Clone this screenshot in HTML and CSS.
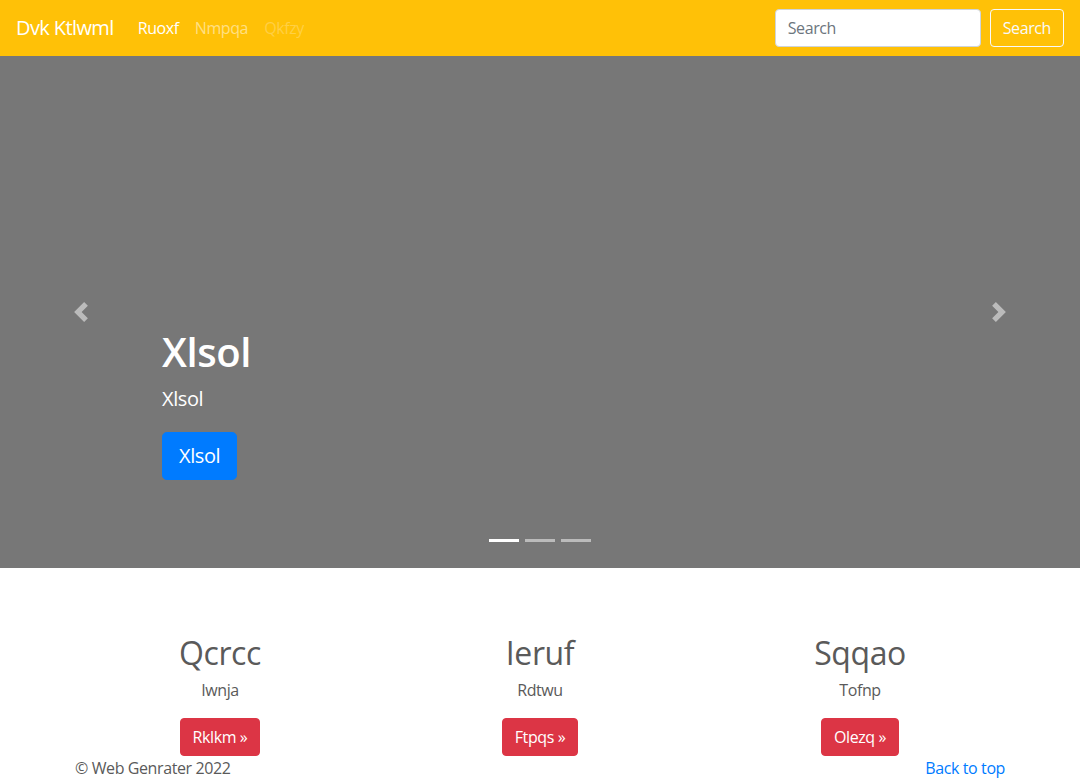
FILE: index.html
```html
<!DOCTYPE html>
<html lang="en">
<head>
<meta charset="utf-8">
<title>Carousel</title>
<link rel="stylesheet" href="styles.css">
</head>
<body>
<header>
  <nav class="navbar">
    <a class="brand" href="#">Dvk Ktlwml</a>
    <ul class="nav">
      <li><a class="nav-link active" href="#">Ruoxf</a></li>
      <li><a class="nav-link" href="#">Nmpqa</a></li>
      <li><a class="nav-link disabled" href="#">Qkfzy</a></li>
    </ul>
    <form class="search">
      <input class="search-input" type="text" placeholder="Search">
      <button class="search-btn" type="button">Search</button>
    </form>
  </nav>
</header>
<main>
  <div class="carousel">
    <ol class="indicators">
      <li class="active"></li>
      <li></li>
      <li></li>
    </ol>
    <div class="caption">
      <h1 class="caption-title">Xlsol</h1>
      <p class="caption-text">Xlsol</p>
      <p class="caption-action"><a class="btn btn-lg btn-primary" href="#">Xlsol</a></p>
    </div>
    <a class="control control-prev" href="#">
      <svg class="control-icon" viewBox="0 0 8 8" width="20" height="20"><path d="M5.25 0l-4 4 4 4 1.5-1.5-2.5-2.5 2.5-2.5-1.5-1.5z" fill="#fff"/></svg>
    </a>
    <a class="control control-next" href="#">
      <svg class="control-icon" viewBox="0 0 8 8" width="20" height="20"><path d="M2.75 0l-1.5 1.5 2.5 2.5-2.5 2.5 1.5 1.5 4-4-4-4z" fill="#fff"/></svg>
    </a>
  </div>

  <div class="container marketing">
    <div class="row">
      <div class="col">
        <h2 class="col-title">Qcrcc</h2>
        <p class="col-text">Iwnja</p>
        <p class="col-action"><a class="btn btn-danger" href="#">Rklkm &raquo;</a></p>
      </div>
      <div class="col">
        <h2 class="col-title">Ieruf</h2>
        <p class="col-text">Rdtwu</p>
        <p class="col-action"><a class="btn btn-danger" href="#">Ftpqs &raquo;</a></p>
      </div>
      <div class="col">
        <h2 class="col-title">Sqqao</h2>
        <p class="col-text">Tofnp</p>
        <p class="col-action"><a class="btn btn-danger" href="#">Olezq &raquo;</a></p>
      </div>
    </div>
  </div>

  <footer class="container footer">
    <p class="footer-copy">&copy; Web Genrater 2022</p>
    <p class="footer-top"><a href="#">Back to top</a></p>
  </footer>
</main>
</body>
</html>
```

FILE: styles.css
```css
* { box-sizing: border-box; }

html, body {
  margin: 0;
  padding: 0;
}

body {
  font-family: "Segoe UI", "Open Sans", "Noto Sans", sans-serif;
  font-size: 16px;
  line-height: 1.5;
  letter-spacing: -0.025em;
  color: #5a5a5a;
  background: #fff;
}

a { text-decoration: none; }

/* Navbar */
.navbar {
  height: 56px;
  background: #ffc107;
  display: flex;
  align-items: center;
  padding: 8px 16px;
}

.brand {
  font-size: 20px;
  line-height: 30px;
  padding: 5px 0;
  margin-right: 16px;
  color: #fff;
  white-space: nowrap;
  letter-spacing: -0.03em;
}

.nav {
  display: flex;
  list-style: none;
  margin: 0;
  padding: 0;
  flex: 1;
}

.nav-link {
  display: block;
  padding: 8px;
  line-height: 24px;
  color: rgba(255, 255, 255, 0.5);
}

.nav-link.active { color: #fff; }
.nav-link.disabled { color: rgba(255, 255, 255, 0.25); }

.search {
  display: flex;
  align-items: center;
  gap: 9px;
  margin: 0;
}

.search-input {
  width: 206px;
  height: 38px;
  padding: 6px 12px;
  font: inherit;
  font-size: 16px;
  letter-spacing: -0.025em;
  color: #495057;
  background: #fff;
  border: 1px solid #ced4da;
  border-radius: 4px;
}

.search-input::placeholder { color: #6c757d; }

.search-btn {
  height: 38px;
  padding: 6px 12px;
  font: inherit;
  font-size: 16px;
  line-height: 24px;
  letter-spacing: -0.025em;
  color: #f8f9fa;
  background: transparent;
  border: 1px solid #f8f9fa;
  border-radius: 4px;
}

/* Carousel */
.carousel {
  position: relative;
  height: 512px;
  background: #777;
  margin-bottom: 64px;
  display: flex;
  flex-direction: column;
  justify-content: flex-end;
  padding: 0 15% 88px;
  color: #fff;
}

.caption-title {
  font-size: 40px;
  font-weight: 600;
  line-height: 1.2;
  margin: 0 0 8px;
}

.caption-text {
  font-size: 20px;
  line-height: 30px;
  margin: 0 0 18px;
}

.caption-action { margin: 0; }

.btn {
  display: inline-block;
  font-size: 16px;
  line-height: 24px;
  padding: 6px 12px;
  border: 1px solid transparent;
  border-radius: 4px;
  color: #fff;
}

.btn-lg {
  font-size: 20px;
  line-height: 30px;
  padding: 8px 16px;
  border-radius: 4.8px;
}

.btn-primary { background: #007bff; border-color: #007bff; }
.btn-danger { background: #dc3545; border-color: #dc3545; }

.control {
  position: absolute;
  top: 0;
  bottom: 0;
  width: 15%;
  display: flex;
  align-items: center;
  justify-content: center;
  opacity: 0.5;
}

.control-prev { left: 0; }
.control-next { right: 0; }

.control-icon { display: block; }

.indicators {
  position: absolute;
  left: 0;
  right: 0;
  bottom: 26px;
  display: flex;
  justify-content: center;
  list-style: none;
  margin: 0;
  padding: 0;
}

.indicators li {
  width: 30px;
  height: 3px;
  margin: 0 3px;
  background: #fff;
  opacity: 0.5;
}

.indicators li.active { opacity: 1; }

/* Marketing */
.container {
  width: 960px;
  margin: 0 auto;
  padding: 0 15px;
}

.row {
  display: grid;
  grid-template-columns: repeat(3, 1fr);
  margin: 0 -15px;
}

.col {
  padding: 0 15px;
  text-align: center;
}

.col-title {
  font-size: 32px;
  font-weight: 500;
  line-height: 1.2;
  margin: 2px 0 6px;
}

.col-text {
  margin: 0 12px 16px;
}

.col-action { margin: 0; }

/* Footer */
.footer {
  display: flex;
  justify-content: space-between;
}

.footer-copy, .footer-top { margin: 0 0 16px; }

.footer-top a { color: #007bff; }
```
